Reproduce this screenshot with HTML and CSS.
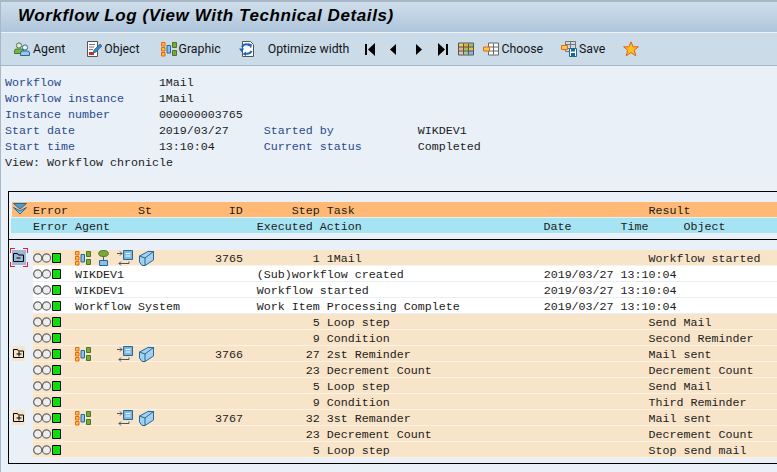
FILE: index.html
```html
<!DOCTYPE html>
<html lang="en">
<head>
    <meta charset="UTF-8">
    <title>Workflow Log</title>
    <link rel="stylesheet" href="styles.css">
</head>
<body>
    <svg class="defs" width="0" height="0">
        <symbol id="i-agent" viewBox="0 0 16 16">
            <circle cx="5" cy="4.5" r="2.6" fill="#e8e8e0" stroke="#4d7a3a"/>
            <path d="M.5 12.5V10q0-2 2-2h5q2 0 2 2v2.5z" fill="#7cb342" stroke="#3f7a2e"/>
            <circle cx="11" cy="6.5" r="2.6" fill="#eef2f6" stroke="#2a6a9a"/>
            <path d="M6.5 14.5V12q0-2 2-2h5q2 0 2 2v2.5z" fill="#9cc4e4" stroke="#1f6a9e"/>
        </symbol>
        <symbol id="i-object" viewBox="0 0 16 16">
            <path d="M1.5.5h10v15h-10z" fill="#fff" stroke="#555"/>
            <path d="M3 3.5h6M3 6h5M3 8.5h4" stroke="#777"/>
            <path d="M3 11h5v3H3z" fill="#d02c20"/>
            <path d="M7 12l1-3 6-6 2 2-6 6z" fill="#3d86c6" stroke="#1f5f96" stroke-width=".7"/>
        </symbol>
        <symbol id="i-graphic" viewBox="0 0 16 16">
            <path d="M.5 1.500h3.500v3.500H.5zM.5 6.500h3.500V10H.5zM.5 11.500h3.500V15H.5z" fill="#fbc02d" stroke="#e8641b"/>
            <path d="M6 4.500h3.500v7.500H6z" fill="#8fc0e0" stroke="#1c6aa0"/>
            <path d="M11.500 1.500h4v5h-4zM11.500 9.500h4v5h-4z" fill="#7fa832" stroke="#47772a"/>
        </symbol>
        <symbol id="i-refresh" viewBox="0 0 16 16">
            <path d="M3.500.5h8l3 3v12h-11z" fill="#fff" stroke="#555"/>
            <path d="M3 6q2-3.500 6-2.500l2 1" fill="none" stroke="#1e64c0" stroke-width="2"/>
            <path d="M9 2l4 1.500-1 4zM0 7.500h5L3 11.500z" fill="#1e64c0"/>
            <path d="M12.500 10q-2 3.500-6 2.500" fill="none" stroke="#1e64c0" stroke-width="2"/>
            <path d="M7 10.500v4.500l-3.500-2z" fill="#1e64c0"/>
        </symbol>
        <symbol id="i-first" viewBox="0 0 11 13">
            <path d="M0 1h2v11H0zM3 6.500L10 0v13z" fill="#000"/>
        </symbol>
        <symbol id="i-prev" viewBox="0 0 8 13"><path d="M1 6.500L7 1v11z" fill="#000"/></symbol>
        <symbol id="i-next" viewBox="0 0 8 13"><path d="M7 6.500L1 1v11z" fill="#000"/></symbol>
        <symbol id="i-last" viewBox="0 0 11 13">
            <path d="M9 1h2v11H9zM8 6.500L1 0v13z" fill="#000"/>
        </symbol>
        <symbol id="i-layout" viewBox="0 0 16 13">
            <path d="M1 1h4.500v3.500H1z" fill="#f8c84a"/><path d="M5.500 1H10v3.500H5.500z" fill="#f4a83a"/><path d="M10 1h5v3.500h-5z" fill="#9cbf6a"/>
            <path d="M1 4.500h4.500V8H1z" fill="#f0b07a"/><path d="M5.500 4.500H10V8H5.500z" fill="#9cbf6a"/><path d="M10 4.500h5V8h-5z" fill="#f8c21e"/>
            <path d="M1 8h4.500v4H1z" fill="#f4bcb0"/><path d="M5.500 8H10v4H5.500z" fill="#a4cc8c"/><path d="M10 8h5v4h-5z" fill="#8cb4d8"/>
            <path d="M.5.5h15v12H.5zM5.500 1v11M10.500 1v11M1 4.500h14M1 8.500h14" fill="none" stroke="#555"/>
        </symbol>
        <symbol id="i-choose" viewBox="0 0 16 13">
            <path d="M5.500.5h10v12h-10z" fill="#fff"/>
            <path d="M5.500.5h10v12h-10zM10.500 1v11M5.500 4.500h10M5.500 8.500h10" fill="none" stroke="#666"/>
            <path d="M.5 4.500h6v4h-6z" fill="#f8cc40" stroke="#e8641b"/>
        </symbol>
        <symbol id="i-save" viewBox="0 0 16 16">
            <path d="M4.500.5h10v10h-10zM9.500 1v10M4.500 3.500h10M4.500 7.500h10" fill="none" stroke="#777"/>
            <path d="M.5 4.500h6v4h-6z" fill="#f8cc40" stroke="#e8641b"/>
            <path d="M8.500 7.500h7v8h-7z" fill="#fff" stroke="#156a9a"/>
            <path d="M10 8h4v2.500h-4zM10 12h4v3h-4z" fill="#156a9a"/>
        </symbol>
        <symbol id="i-star" viewBox="0 0 16 16">
            <path d="M8 .8l2.100 5h5.300l-4.200 3.400 1.600 5.600L8 11.600l-4.800 3.200 1.600-5.600L.6 5.800h5.300z" fill="#fcc21c" stroke="#e0601a"/>
        </symbol>
        <symbol id="i-lights" viewBox="0 0 28 10">
            <circle cx="4.700" cy="5" r="4.100" fill="#eee" stroke="#666" stroke-width="1.200"/>
            <circle cx="13.500" cy="5" r="4.100" fill="#eee" stroke="#666" stroke-width="1.200"/>
            <path d="M19.500.5h8v9h-8z" fill="#0be00b" stroke="#000"/>
        </symbol>
        <symbol id="i-flow" viewBox="0 0 11 16">
            <ellipse cx="5.500" cy="3.500" rx="4.800" ry="3" fill="#7fa832" stroke="#47772a"/>
            <path d="M5.500 6.500v4" stroke="#1c6aa0"/>
            <path d="M1.500 10.500h8v5h-8z" fill="#8fc0e0" stroke="#1c6aa0"/>
        </symbol>
        <symbol id="i-transfer" viewBox="0 0 16 16">
            <path d="M6.500.5h9v9h-9z" fill="#7fb4dc" stroke="#1c6aa0"/>
            <path d="M8.500 3.500h5M8.500 6h5" stroke="#fff"/>
            <path d="M0 3.500h5M3 1.500l2 2-2 2M12 11.500v2H2M4 11.500l-2 2 2 2" fill="none" stroke="#555"/>
        </symbol>
        <symbol id="i-cube" viewBox="0 0 15 15">
            <path d="M.5 5L9 .5h5.500v8.500L6 14.500H3L.5 11z" fill="#a8d0ec" stroke="#1c6aa0"/>
            <path d="M.5 5l5.500 2v7.500M6 7l8.500-6.500" fill="none" stroke="#1c6aa0"/>
        </symbol>
        <symbol id="i-expand" viewBox="0 0 11 9">
            <path d="M.5 8.500v-8h4l1 1.500h5v6.500z" fill="#f8e4c8" stroke="#000"/>
            <path d="M3.500 5h5M6 2.500v5" stroke="#000"/>
        </symbol>
        <symbol id="i-collapse" viewBox="0 0 11 9">
            <path d="M.5 8.500v-8h4l1 1.500h5v6.500z" fill="#9db7d6" stroke="#000"/>
            <path d="M3.500 5h4" stroke="#000"/>
        </symbol>
        <symbol id="i-filter" viewBox="0 0 14 12">
            <path d="M.5.500h13L7 6z" fill="#4f9bd0" stroke="#1c6aa0"/>
            <path d="M.5 4.500L7 11l6.500-6.500L7 8z" fill="#8fc0e0" stroke="#1c6aa0"/>
        </symbol>
    </svg>

    <header class="title-bar">
        <h1>Workflow Log (View With Technical Details)</h1>
    </header>

    <div class="toolbar">
        <span class="btn b-agent"><svg class="ico"><use href="#i-agent"/></svg>Agent</span>
        <span class="btn b-object"><svg class="ico"><use href="#i-object"/></svg>Object</span>
        <span class="btn b-graphic"><svg class="ico"><use href="#i-graphic"/></svg>Graphic</span>
        <span class="btn b-refresh"><svg class="ico"><use href="#i-refresh"/></svg></span>
        <span class="btn b-optimize">Optimize width</span>
        <svg class="nav nav-first"><use href="#i-first"/></svg>
        <svg class="nav nav-prev"><use href="#i-prev"/></svg>
        <svg class="nav nav-next"><use href="#i-next"/></svg>
        <svg class="nav nav-last"><use href="#i-last"/></svg>
        <svg class="ico b-layout"><use href="#i-layout"/></svg>
        <span class="btn b-choose"><svg class="ico"><use href="#i-choose"/></svg>Choose</span>
        <span class="btn b-save"><svg class="ico"><use href="#i-save"/></svg>Save</span>
        <svg class="ico b-star"><use href="#i-star"/></svg>
    </div>

    <main class="content">
        <div class="info">
            <div class="info-row"><span class="lbl w22">Workflow</span><span>1Mail</span></div>
            <div class="info-row"><span class="lbl w22">Workflow instance</span><span>1Mail</span></div>
            <div class="info-row"><span class="lbl w22">Instance number</span><span>000000003765</span></div>
            <div class="info-row"><span class="lbl w22">Start date</span><span class="w15">2019/03/27</span><span class="lbl w22">Started by</span><span>WIKDEV1</span></div>
            <div class="info-row"><span class="lbl w22">Start time</span><span class="w15">13:10:04</span><span class="lbl w22">Current status</span><span>Completed</span></div>
            <div class="info-row">View: Workflow chronicle</div>
        </div>

        <section class="log">
            <div class="head head-1">
                <svg class="filter"><use href="#i-filter"/></svg>
                <span class="w15">Error</span><span class="w13">St</span><span class="w9">ID</span><span class="w5">Step</span><span class="w46">Task</span><span>Result</span>
            </div>
            <div class="head head-2">
                <span class="w6">Error</span><span class="w26">Agent</span><span class="w41">Executed Action</span><span class="w11">Date</span><span class="w9">Time</span><span>Object</span>
            </div>

            <div class="rows">
                <div class="line">
                    <span class="node node-selected"><svg class="folder"><use href="#i-collapse"/></svg></span>
                    <div class="row">
                        <svg class="lights"><use href="#i-lights"/></svg>
                        <span class="icons"><svg class="ig"><use href="#i-graphic"/></svg><svg class="if"><use href="#i-flow"/></svg><svg class="it"><use href="#i-transfer"/></svg><svg class="ic"><use href="#i-cube"/></svg></span>
                        <span class="id">3765</span><span class="step">1</span><span class="task">1Mail</span><span>Workflow started</span>
                    </div>
                </div>
                <div class="line">
                    <span class="node"></span>
                    <div class="row row-detail">
                        <svg class="lights"><use href="#i-lights"/></svg>
                        <span class="w26">WIKDEV1</span><span class="w41">(Sub)workflow created</span><span class="w11">2019/03/27</span><span>13:10:04</span>
                    </div>
                </div>
                <div class="line">
                    <span class="node"></span>
                    <div class="row row-detail">
                        <svg class="lights"><use href="#i-lights"/></svg>
                        <span class="w26">WIKDEV1</span><span class="w41">Workflow started</span><span class="w11">2019/03/27</span><span>13:10:04</span>
                    </div>
                </div>
                <div class="line">
                    <span class="node"></span>
                    <div class="row row-detail">
                        <svg class="lights"><use href="#i-lights"/></svg>
                        <span class="w26">Workflow System</span><span class="w41">Work Item Processing Complete</span><span class="w11">2019/03/27</span><span>13:10:04</span>
                    </div>
                </div>
                <div class="line">
                    <span class="node"></span>
                    <div class="row">
                        <svg class="lights"><use href="#i-lights"/></svg>
                        <span class="icons"></span><span class="id"></span><span class="step">5</span><span class="task">Loop step</span><span>Send Mail</span>
                    </div>
                </div>
                <div class="line">
                    <span class="node"></span>
                    <div class="row">
                        <svg class="lights"><use href="#i-lights"/></svg>
                        <span class="icons"></span><span class="id"></span><span class="step">9</span><span class="task">Condition</span><span>Second Reminder</span>
                    </div>
                </div>
                <div class="line">
                    <span class="node"><span class="node-mark"><svg class="folder"><use href="#i-expand"/></svg></span></span>
                    <div class="row">
                        <svg class="lights"><use href="#i-lights"/></svg>
                        <span class="icons"><svg class="ig"><use href="#i-graphic"/></svg><span class="if"></span><svg class="it"><use href="#i-transfer"/></svg><svg class="ic"><use href="#i-cube"/></svg></span>
                        <span class="id">3766</span><span class="step">27</span><span class="task">2st Reminder</span><span>Mail sent</span>
                    </div>
                </div>
                <div class="line">
                    <span class="node"></span>
                    <div class="row">
                        <svg class="lights"><use href="#i-lights"/></svg>
                        <span class="icons"></span><span class="id"></span><span class="step">23</span><span class="task">Decrement Count</span><span>Decrement Count</span>
                    </div>
                </div>
                <div class="line">
                    <span class="node"></span>
                    <div class="row">
                        <svg class="lights"><use href="#i-lights"/></svg>
                        <span class="icons"></span><span class="id"></span><span class="step">5</span><span class="task">Loop step</span><span>Send Mail</span>
                    </div>
                </div>
                <div class="line">
                    <span class="node"></span>
                    <div class="row">
                        <svg class="lights"><use href="#i-lights"/></svg>
                        <span class="icons"></span><span class="id"></span><span class="step">9</span><span class="task">Condition</span><span>Third Reminder</span>
                    </div>
                </div>
                <div class="line">
                    <span class="node"><span class="node-mark"><svg class="folder"><use href="#i-expand"/></svg></span></span>
                    <div class="row">
                        <svg class="lights"><use href="#i-lights"/></svg>
                        <span class="icons"><svg class="ig"><use href="#i-graphic"/></svg><span class="if"></span><svg class="it"><use href="#i-transfer"/></svg><svg class="ic"><use href="#i-cube"/></svg></span>
                        <span class="id">3767</span><span class="step">32</span><span class="task">3st Remander</span><span>Mail sent</span>
                    </div>
                </div>
                <div class="line">
                    <span class="node"></span>
                    <div class="row">
                        <svg class="lights"><use href="#i-lights"/></svg>
                        <span class="icons"></span><span class="id"></span><span class="step">23</span><span class="task">Decrement Count</span><span>Decrement Count</span>
                    </div>
                </div>
                <div class="line">
                    <span class="node"></span>
                    <div class="row">
                        <svg class="lights"><use href="#i-lights"/></svg>
                        <span class="icons"></span><span class="id"></span><span class="step">5</span><span class="task">Loop step</span><span>Stop send mail</span>
                    </div>
                </div>
            </div>
        </section>
    </main>
</body>
</html>
```

FILE: styles.css
```css
html, body {
    margin: 0;
    height: 100%;
    overflow: hidden;
}

body {
    background-color: #e9f0f8;
    color: #1c1c1c;
    font-family: "Liberation Mono", monospace;
    font-size: 11.67px;
    line-height: 16px;
    border-left: 1px solid #a9b8c8;
}

.defs {
    position: absolute;
}

.title-bar {
    height: 30px;
    border-top: 2px solid #a9b8c8;
    border-bottom: 1px solid #eef3f8;
    background: linear-gradient(#d0deeb, #aec5dc);
}

.title-bar h1 {
    margin: 0;
    padding-left: 17px;
    font-family: "Liberation Sans", sans-serif;
    font-size: 17px;
    font-style: italic;
    font-weight: bold;
    line-height: 27px;
    letter-spacing: .6px;
    color: #000;
}

.toolbar {
    display: flex;
    align-items: center;
    height: 32px;
    background-color: #ccdbe8;
    border-bottom: 1px solid #a9b8c8;
    font-family: Roboto, sans-serif;
    font-size: 12.3px;
    color: #10161c;
}

.btn {
    display: flex;
    align-items: center;
    gap: 2px;
}

.ico {
    width: 16px;
    height: 16px;
    flex: none;
}

.nav {
    height: 13px;
    flex: none;
}

.b-agent { margin-left: 13px; gap: 3px; }
.b-object { margin-left: 21px; }
.b-graphic { margin-left: 21px; }
.b-refresh { margin-left: 18px; }
.b-optimize { margin-left: 13px; }
.nav-first { width: 11px; margin-left: 16px; }
.nav-prev { width: 8px; margin-left: 13px; }
.nav-next { width: 8px; margin-left: 18px; }
.nav-last { width: 11px; margin-left: 14px; }
.b-layout { margin-left: 10px; }
.b-choose { margin-left: 9px; }
.b-save { margin-left: 18px; }
.b-star { margin-left: 18px; }

.content {
    padding: 9px 0 0 4px;
}

.info-row {
    display: flex;
    height: 16px;
    white-space: pre;
}

.lbl {
    color: #2b4a8c;
}

.w5 { width: 5ch; flex: none; }
.w6 { width: 6ch; flex: none; }
.w9 { width: 9ch; flex: none; }
.w11 { width: 11ch; flex: none; }
.w13 { width: 13ch; flex: none; }
.w15 { width: 15ch; flex: none; }
.w22 { width: 22ch; flex: none; }
.w26 { width: 26ch; flex: none; }
.w41 { width: 41ch; flex: none; }
.w46 { width: 46ch; flex: none; }

.log {
    margin: 20px -4px 0 3px;
    height: 261px;
    border: 1px solid #000;
    border-right: 0;
    padding-top: 10px;
}

.head {
    display: flex;
    height: 15px;
    line-height: 18px;
    white-space: pre;
}

.head-1 {
    position: relative;
    margin-left: 3px;
    padding-left: 21px;
    background-color: #ffb974;
}

.head-2 {
    margin: 1px 0 0 2px;
    padding-left: 22px;
    background-color: #a6e4f4;
}

.filter {
    position: absolute;
    left: 1px;
    top: 1px;
    width: 14px;
    height: 12px;
}

.rows {
    margin-top: 6px;
    padding-top: 10px;
    border-top: 1px solid #000;
}

.line {
    display: flex;
    height: 16px;
}

.node {
    position: relative;
    width: 24px;
    flex: none;
}

.node-mark {
    position: absolute;
    left: 3px;
    top: 0;
    width: 13px;
    height: 15px;
    background-color: #f8e4c8;
    display: flex;
    align-items: center;
    justify-content: center;
}

/* blue pressed button with red corner marks */
.node-selected::before {
    content: "";
    position: absolute;
    left: 3px;
    top: 0;
    width: 14px;
    height: 15px;
    background-color: #9db7d6;
}

.node-selected::after {
    content: "";
    position: absolute;
    left: 1px;
    top: -2px;
    width: 18px;
    height: 19px;
    background:
        linear-gradient(#d8242a, #d8242a) 0 0 / 5px 1px,
        linear-gradient(#d8242a, #d8242a) 0 0 / 1px 5px,
        linear-gradient(#d8242a, #d8242a) 100% 0 / 5px 1px,
        linear-gradient(#d8242a, #d8242a) 100% 0 / 1px 5px,
        linear-gradient(#d8242a, #d8242a) 0 100% / 5px 1px,
        linear-gradient(#d8242a, #d8242a) 0 100% / 1px 5px,
        linear-gradient(#d8242a, #d8242a) 100% 100% / 5px 1px,
        linear-gradient(#d8242a, #d8242a) 100% 100% / 1px 5px;
    background-repeat: no-repeat;
}

.folder {
    position: relative;
    width: 11px;
    height: 9px;
}

.node-selected .folder {
    position: absolute;
    left: 4px;
    top: 3px;
    z-index: 1;
}

.row {
    display: flex;
    align-items: center;
    flex: 1;
    height: 13px;
    padding-top: 2px;
    border-bottom: 1px solid #fbf2e6;
    background-color: #f8e4c8;
    white-space: pre;
}

.row-detail {
    background-color: #fff;
    border-bottom-color: #e6eef6;
}

.lights {
    width: 28px;
    height: 10px;
    margin: 0 14px 1px 0;
    flex: none;
}

.icons {
    display: flex;
    align-items: center;
    width: 20ch;
    margin-bottom: 1px;
    flex: none;
}

.ig { width: 16px; height: 16px; margin-right: 7px; }
.if { width: 11px; height: 16px; margin-right: 8px; }
.it { width: 16px; height: 16px; margin-right: 6px; }
.ic { width: 15px; height: 15px; }

.id {
    width: 4ch;
    flex: none;
}

.step {
    width: 11ch;
    flex: none;
    text-align: right;
}

.task {
    width: 46ch;
    flex: none;
    margin-left: 1ch;
}
```
